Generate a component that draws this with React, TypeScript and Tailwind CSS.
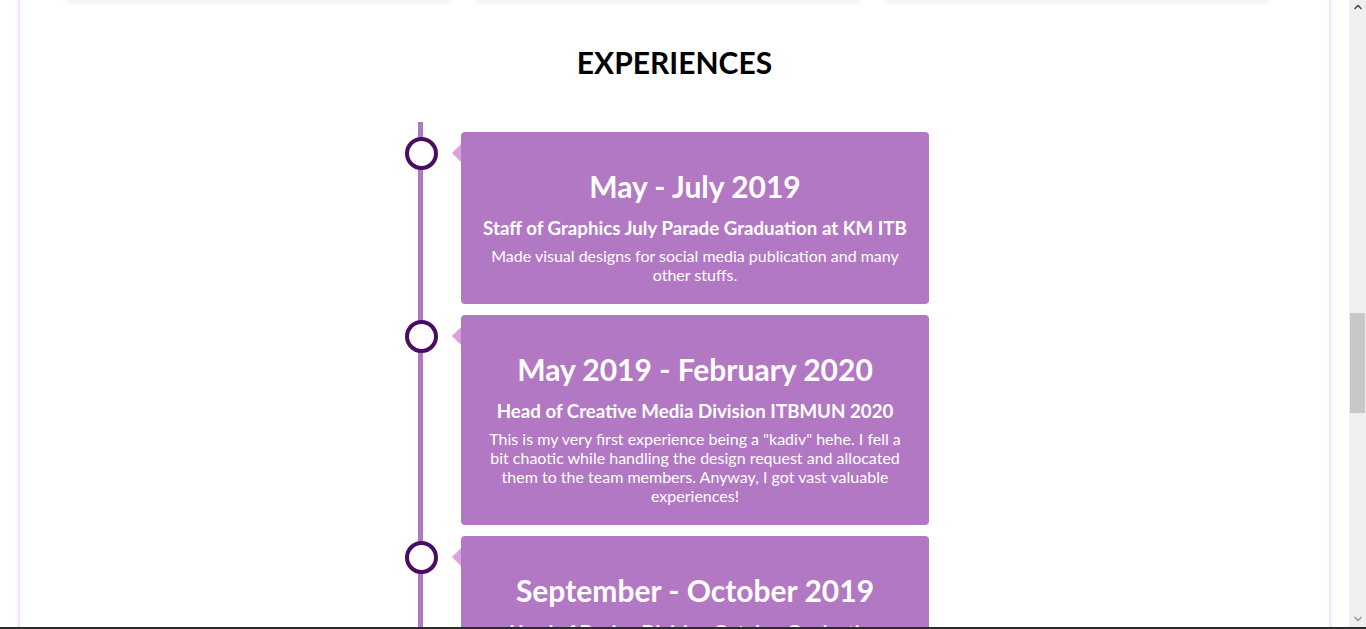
import { ChevronUp, ChevronDown } from 'lucide-react';

interface Experience {
  period: string;
  role: string;
  desc: string;
}

const experiences: Experience[] = [
  {
    period: 'May - July 2019',
    role: 'Staff of Graphics July Parade Graduation at KM ITB',
    desc: 'Made visual designs for social media publication and many other stuffs.',
  },
  {
    period: 'May 2019 - February 2020',
    role: 'Head of Creative Media Division ITBMUN 2020',
    desc: 'This is my very first experience being a "kadiv" hehe. I fell a bit chaotic while handling the design request and allocated them to the team members. Anyway, I got vast valuable experiences!',
  },
  {
    period: 'September - October 2019',
    role: 'Head of Design Division October Graduation',
    desc: 'Designed the visual identity and publication materials for the graduation parade.',
  },
];

const TimelineItem = ({ item }: { item: Experience }) => (
  <div className="flex items-start">
    <div className="mt-[5px] h-[33px] w-[33px] shrink-0 rounded-full border-4 border-[#4b0a64] bg-white" />
    <div className="ml-[14px] mt-[12px] h-0 w-0 border-y-[9px] border-r-[9px] border-y-transparent border-r-[#dda0dd]" />
    <div className="w-[468px] rounded-[4px] bg-[#b378c4] px-4 pb-[20px] pt-[36px] text-center text-white">
      <h3 className="text-[30px] font-bold leading-[36px]">{item.period}</h3>
      <h4 className="mt-[13px] text-[18.72px] font-bold leading-[23px]">{item.role}</h4>
      <p className="mt-[6px] px-2 text-[16px] leading-[19px]">{item.desc}</p>
    </div>
  </div>
);

const Scrollbar = () => (
  <div className="flex h-full w-[17px] shrink-0 flex-col items-center bg-[#f0f0f0]">
    <ChevronUp className="mt-[1px] h-[12px] w-[12px] text-[#505050]" strokeWidth={3.5} />
    <div className="mt-[300px] h-[100px] w-[15px] bg-[#c8c8c8]" />
    <div className="flex-1" />
    <ChevronDown className="mb-[2px] h-[12px] w-[12px] text-[#a0a0a0]" strokeWidth={3.5} />
  </div>
);

const App = () => {
  return (
    <div className="flex h-[629px] w-[1366px] flex-col overflow-hidden bg-white font-['Lato','Open_Sans',sans-serif]">
      <div className="flex h-[627px] w-full overflow-hidden">
        <div className="h-full flex-1 px-5">
          <div className="h-[760px] bg-white shadow-[0_0_3px_2px_#f1ddff]">
            <div className="-mt-[12px] ml-[45px] flex gap-[23px]">
              <div className="h-[12px] w-[387px] rounded-b-md bg-white shadow-[0_2px_6px_rgba(0,0,0,0.08)]" />
              <div className="h-[12px] w-[386px] rounded-b-md bg-white shadow-[0_2px_6px_rgba(0,0,0,0.08)]" />
              <div className="h-[12px] w-[386px] rounded-b-md bg-white shadow-[0_2px_6px_rgba(0,0,0,0.08)]" />
            </div>
            <h2 className="mt-[44px] text-center text-[30px] font-bold leading-[36px] text-black">EXPERIENCES</h2>
            <div className="relative ml-[385px] mt-[42px] flex w-[524px] flex-col gap-[11px] pt-[10px]">
              <div className="absolute bottom-0 left-[13px] top-0 w-[5px] bg-[#b378c4]" />
              {experiences.map((item) => (
                <div key={item.period} className="relative">
                  <TimelineItem item={item} />
                </div>
              ))}
            </div>
          </div>
        </div>
        <Scrollbar />
      </div>
      <div className="h-[2px] w-full bg-[#2b2b2b]" />
    </div>
  );
};

export default App;
